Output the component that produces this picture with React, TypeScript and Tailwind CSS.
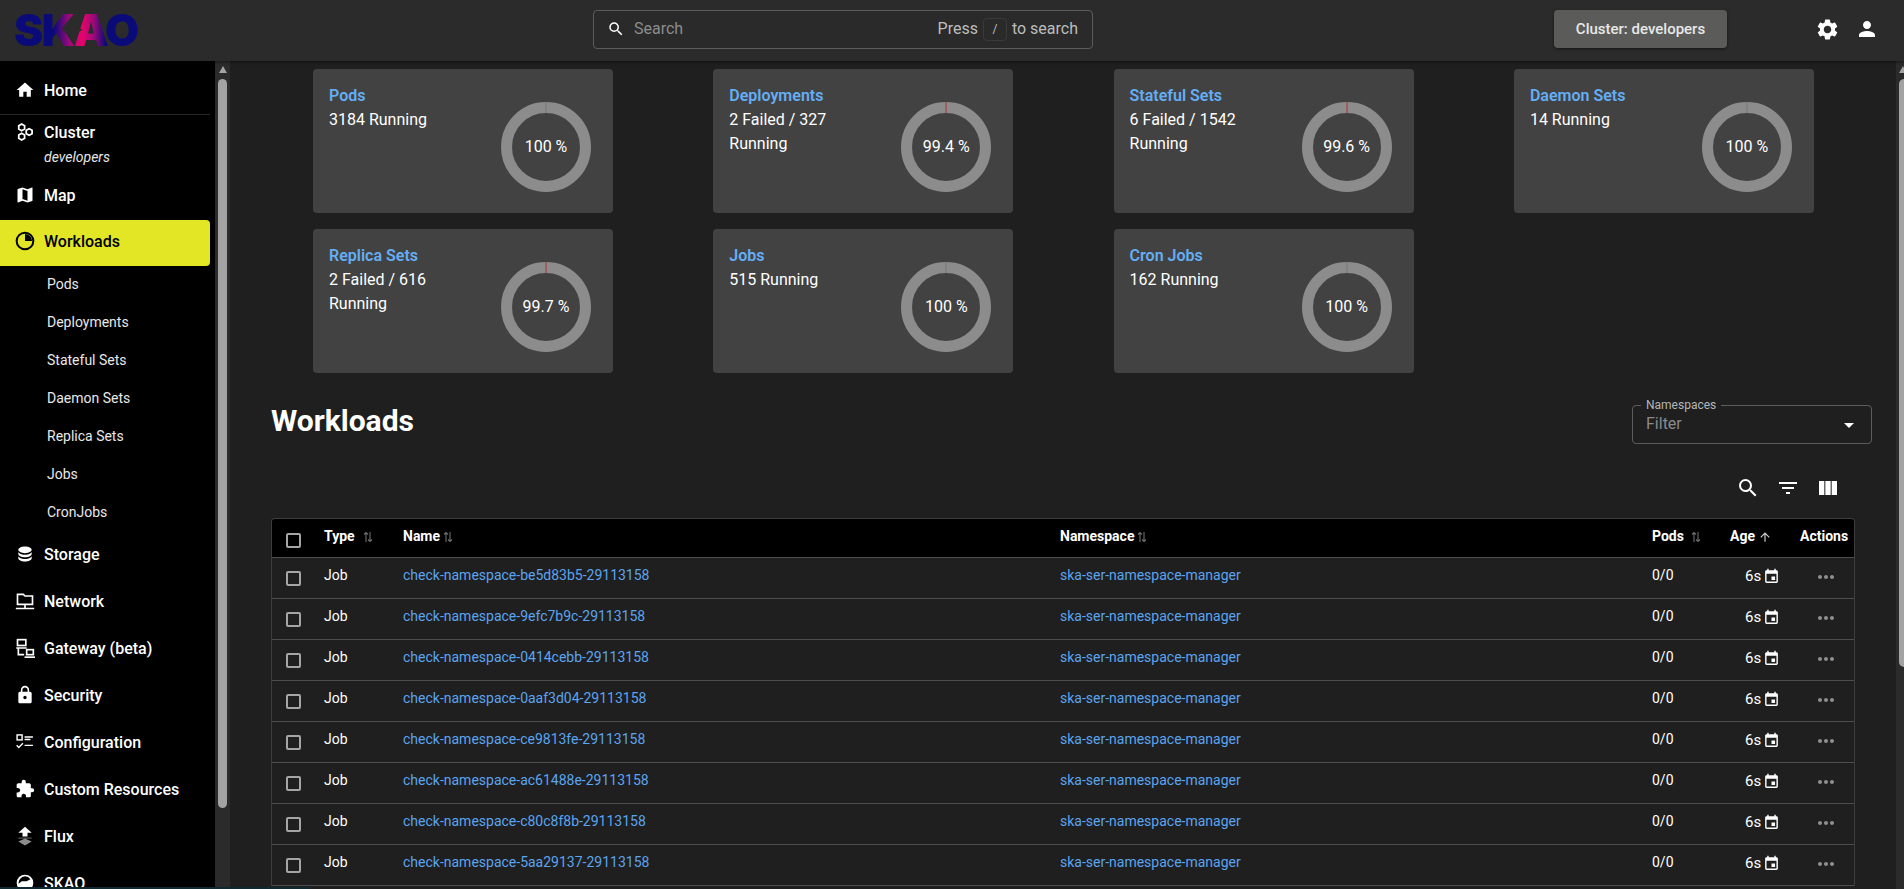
import type { ReactNode } from "react";
import {
  MdArrowDropDown,
  MdArrowUpward,
  MdEvent,
  MdExtension,
  MdFilterList,
  MdHome,
  MdLock,
  MdMap,
  MdMoreHoriz,
  MdPerson,
  MdSearch,
  MdSettings,
  MdViewColumn,
} from "react-icons/md";

const ClusterIcon = () => (
  <svg viewBox="0 0 24 24" className="size-[20px]" fill="none" stroke="currentColor" strokeWidth="2.1">
    <polygon points="8,2.5 11.5,4.5 11.5,8.5 8,10.5 4.5,8.5 4.5,4.5" />
    <polygon points="17,8 20.5,10 20.5,14 17,16 13.5,14 13.5,10" />
    <polygon points="8,13.5 11.5,15.5 11.5,19.5 8,21.5 4.5,19.5 4.5,15.5" />
  </svg>
);

const WorkloadsIcon = () => (
  <svg viewBox="0 0 24 24" className="size-[20px]" fill="none" stroke="currentColor" strokeWidth="2.4">
    <circle cx="12" cy="12" r="10" />
    <path d="M12 3.5a8.5 8.5 0 0 1 8.5 8.5H12z" fill="currentColor" stroke="none" />
  </svg>
);

const StorageIcon = () => (
  <svg viewBox="0 0 24 24" className="size-[20px]" fill="currentColor">
    <path d="M12,3C7.58,3 4,4.79 4,7C4,9.21 7.58,11 12,11C16.42,11 20,9.21 20,7C20,4.79 16.42,3 12,3M4,9V12C4,14.21 7.58,16 12,16C16.42,16 20,14.21 20,12V9C20,11.21 16.42,13 12,13C7.58,13 4,11.21 4,9M4,14V17C4,19.21 7.58,21 12,21C16.42,21 20,19.21 20,17V14C20,16.21 16.42,18 12,18C7.58,18 4,16.21 4,14Z" />
  </svg>
);

const NetworkIcon = () => (
  <svg viewBox="0 0 24 24" className="size-[20px]" fill="none" stroke="currentColor" strokeWidth="2">
    <path d="M3 16V4h7l2 2h9v10z" />
    <path d="M12 16v5M1 21h22" />
  </svg>
);

const GatewayIcon = () => (
  <svg viewBox="0 0 24 24" className="size-[20px]" fill="none" stroke="currentColor" strokeWidth="2">
    <rect x="3" y="2" width="10" height="7" />
    <path d="M1.5 12h12.5M4 12v8h7" />
    <rect x="14" y="14" width="8" height="6" />
    <path d="M11.5 23h12.5" />
  </svg>
);

const ConfigIcon = () => (
  <svg viewBox="0 0 24 24" className="size-[20px]" fill="none" stroke="currentColor" strokeWidth="1.7">
    <rect x="2.5" y="3.5" width="6" height="6" />
    <path d="M11.5 6h10M11.5 9h7M11.5 16h10M2 16l2.5 2.5L9.5 13.5" />
  </svg>
);

const FluxIcon = () => (
  <svg viewBox="0 0 24 24" className="size-[20px]" fill="currentColor">
    <path d="M12 1 20 8h-5v4.5H9V8H4z" />
    <path d="M12 15l8 3.5-8 5-8-5z" opacity="0.55" />
    <path d="M4 14.5h16" stroke="currentColor" strokeWidth="1" opacity="0.5" />
  </svg>
);

const GlobeIcon = () => (
  <svg viewBox="0 0 24 24" className="size-[20px]" fill="currentColor">
    <path d="M12 2a10 10 0 1 0 0 20 10 10 0 0 0 0-20m0 2a8 8 0 0 1 6.5 3.4L14 10H8l-3.6 3A8 8 0 0 1 12 4" />
  </svg>
);

const SortArrows = () => (
  <svg viewBox="0 0 10 12" className="w-[10px] h-[12px] shrink-0 text-[#6e6e6e]" fill="none" stroke="currentColor" strokeWidth="1.1">
    <path d="M3 11V1.5M1 3.5l2-2 2 2M7 1v9.5M5 8.5l2 2 2-2" />
  </svg>
);

const Checkbox = () => <span className="block size-[15px] rounded-[2px] border-2 border-[#a5a5a5]" />;

const NavItem = ({ icon, label, sub, className = "" }: { icon: ReactNode; label: string; sub?: string; className?: string }) => (
  <div className={`flex items-start pl-[13px] h-[47px] pt-[11px] text-white ${className}`}>
    <span className="w-[31px] shrink-0 pl-[2px] pt-[1px]">{icon}</span>
    <div>
      <div className="text-[16px] leading-[24px] font-medium">{label}</div>
      {sub && <div className="text-[14px] leading-[20px] italic text-[#e6e6e6] mt-[2px]">{sub}</div>}
    </div>
  </div>
);

const subItems = ["Pods", "Deployments", "Stateful Sets", "Daemon Sets", "Replica Sets", "Jobs", "CronJobs"];

const Sidebar = () => (
  <aside className="w-[215px] shrink-0 bg-black overflow-hidden">
    <div className="w-[210px]">
      <div className="h-[54px] pt-[7px] border-b border-[#262626]">
        <NavItem icon={<MdHome size={20} />} label="Home" />
      </div>
      <NavItem icon={<ClusterIcon />} label="Cluster" sub="developers" className="!h-[57px] !pt-[6px]" />
      <div className="h-[47px] pt-[1px]">
        <NavItem icon={<MdMap size={20} />} label="Map" />
      </div>
      <div className="mt-[1px] h-[46px] rounded-r-[4px] bg-[#e3e624] text-black">
        <NavItem icon={<WorkloadsIcon />} label="Workloads" className="!text-black !pt-[10px]" />
      </div>
      <ul>
        {subItems.map((s) => (
          <li key={s} className="h-[38px] pl-[47px] text-[14px] leading-[36px] text-[#e8e8e8]">
            {s}
          </li>
        ))}
      </ul>
      <div>
        <NavItem icon={<StorageIcon />} label="Storage" />
        <NavItem icon={<NetworkIcon />} label="Network" />
        <NavItem icon={<GatewayIcon />} label="Gateway (beta)" />
        <NavItem icon={<MdLock size={20} />} label="Security" />
        <NavItem icon={<ConfigIcon />} label="Configuration" />
        <NavItem icon={<MdExtension size={20} />} label="Custom Resources" />
        <NavItem icon={<FluxIcon />} label="Flux" />
        <NavItem icon={<GlobeIcon />} label="SKAO" />
      </div>
    </div>
  </aside>
);

const Scrollbar = ({ wide, thumb }: { wide?: boolean; thumb: string }) => (
  <div className={`shrink-0 bg-[#2b2b2b] flex flex-col pt-[5px] ${wide ? "w-[15px] pl-[3px] pr-[3px]" : "w-[8px] pl-[3px]"}`}>
    <div className="h-0 w-0 mx-auto border-x-[4.5px] border-b-[7px] border-x-transparent border-b-[#a3a3a3]" />
    <div className={`mt-[6px] rounded-[5px] bg-[#a3a3a3] ${thumb} ${wide ? "w-[9px]" : "w-[9px] rounded-r-none"}`} />
  </div>
);

const Donut = ({ pct, failed }: { pct: string; failed?: boolean }) => (
  <div className="relative size-[90px] shrink-0">
    <svg viewBox="0 0 90 90" className="size-[90px]">
      <circle cx="45" cy="45" r="39.5" fill="none" stroke="#8c8c8c" strokeWidth="11" />
      <line x1="45" y1="0" x2="45" y2="11" stroke={failed ? "#a8413f" : "#7a7a7a"} strokeWidth="1.2" />
    </svg>
    <div className="absolute inset-0 flex items-center justify-center text-[16px] text-white">{pct}</div>
  </div>
);

const StatCard = ({ title, lines, pct, failed }: { title: string; lines: string[]; pct: string; failed?: boolean }) => (
  <div className="w-[300px] h-[144px] rounded-[4px] bg-[#424242] flex justify-between pl-[16px] pr-[22px] pt-[33px] relative">
    <div className="-mt-[18px] w-[140px]">
      <div className="text-[16px] leading-[24px] font-semibold text-[#64aef5]">{title}</div>
      {lines.map((l) => (
        <div key={l} className="text-[16px] leading-[24px] text-white">
          {l}
        </div>
      ))}
    </div>
    <Donut pct={pct} failed={failed} />
  </div>
);

const rows = ["be5d83b5", "9efc7b9c", "0414cebb", "0aaf3d04", "ce9813fe", "ac61488e", "c80c8f8b", "5aa29137"];

const Th = ({ children, className = "" }: { children: ReactNode; className?: string }) => (
  <th className={`pl-4 pr-0 pb-[2px] text-left font-bold text-[14px] text-white whitespace-nowrap ${className}`}>{children}</th>
);

const WorkloadsTable = () => (
  <div className="mx-[41px] rounded-t-[4px] border-x border-t border-[#3d3d3d] w-[1584px] overflow-hidden">
    <table className="w-full table-fixed border-collapse text-[14px]">
      <colgroup>
        <col className="w-[36px]" />
        <col className="w-[79px]" />
        <col className="w-[657px]" />
        <col className="w-[592px]" />
        <col className="w-[78px]" />
        <col />
      </colgroup>
      <thead>
        <tr className="h-[38px] bg-black border-b border-[#4d4d4d]">
          <th className="pl-[14px] pt-[6px]">
            <Checkbox />
          </th>
          <Th>
            <span className="flex items-center gap-[8px]">
              Type <SortArrows />
            </span>
          </Th>
          <Th>
            <span className="flex items-center gap-[3px]">
              Name <SortArrows />
            </span>
          </Th>
          <Th>
            <span className="flex items-center gap-[3px]">
              Namespace <SortArrows />
            </span>
          </Th>
          <Th>
            <span className="flex items-center gap-[7px]">
              Pods <SortArrows />
            </span>
          </Th>
          <Th>
            <span className="flex items-center gap-[3px]">
              Age <MdArrowUpward size={14} className="text-[#cfcfcf]" />
            </span>
          </Th>
        </tr>
      </thead>
      <tbody>
        {rows.map((r) => (
          <tr key={r} className="h-[41px] border-b border-[#4d4d4d] text-white">
            <td className="pl-[14px] pt-[1px]">
              <Checkbox />
            </td>
            <td className="px-4 pb-[4px]">Job</td>
            <td className="px-4 pb-[4px]">
              <a className="text-[#5ba4ef]">check-namespace-{r}-29113158</a>
            </td>
            <td className="px-4 pb-[4px]">
              <a className="text-[#5ba4ef]">ska-ser-namespace-manager</a>
            </td>
            <td className="px-4 pb-[4px]">0/0</td>
            <td className="pl-[31px] pb-[2px]">
              <span className="flex items-center gap-[2px] text-[15px]">
                6s <MdEvent size={17} />
              </span>
            </td>
          </tr>
        ))}
      </tbody>
    </table>
  </div>
);

export default function App() {
  return (
    <div className="relative flex h-screen flex-col overflow-hidden bg-[#1f1f1f] font-['Roboto','Noto_Sans',sans-serif]">
      <header className="relative z-10 h-[61px] shrink-0 flex items-center bg-[#2b2b2b] shadow-[0_1px_3px_rgba(0,0,0,0.5)]">
        <div className="relative w-[593px] pl-[14px]">
          <span className="inline-block font-['Inter',sans-serif] font-black text-[44px] leading-[44px] tracking-[-1.5px] bg-[linear-gradient(90deg,#0a0a78_32%,#a00a78_45%,#e8046b_55%,#a00a78_64%,#0a0a78_74%)] bg-clip-text text-transparent">
            SKAO
          </span>
          <svg viewBox="0 0 24 24" className="absolute left-[60px] top-[10px] size-[24px]" fill="#2b2b2b">
            <path d="M12 1l3 8 8 3-8 3-3 8-3-8-8-3 8-3z" />
          </svg>
        </div>
        <div className="h-[39px] w-[500px] rounded-[4px] border border-[#5c5c5c] bg-[#2a2a2a] flex items-center pl-[13px] pr-[14px] mb-[3px]">
          <MdSearch size={18} className="text-white" />
          <span className="ml-[9px] text-[16px] text-[#8c8c8c]">Search</span>
          <div className="ml-auto flex items-center text-[16px] text-[#bdbdbd]">
            Press
            <span className="mx-[5px] flex h-[23px] w-[24px] items-center justify-center rounded-[4px] border border-[#3a3a3a] text-[12px]">/</span>
            to search
          </div>
        </div>
        <button className="ml-[461px] h-[38px] w-[173px] rounded-[4px] bg-[#5b5b59] text-[15px] font-medium text-[#e8e8e8] shadow-[0_1px_3px_rgba(0,0,0,0.5)] mb-[3px]">
          Cluster: developers
        </button>
        <MdSettings size={25} className="ml-[88px] text-white mb-[3px]" />
        <MdPerson size={24} className="ml-[15px] text-white mb-[3px]" />
      </header>

      <div className="flex min-h-0 flex-1">
        <Sidebar />
        <Scrollbar wide thumb="h-[729px]" />
        <main className="min-w-0 flex-1 overflow-hidden">
          <div className="pl-[83px] pt-[8px] grid grid-cols-[repeat(4,300px)] gap-x-[100.3px] gap-y-[16px]">
            <StatCard title="Pods" lines={["3184 Running"]} pct="100 %" />
            <StatCard title="Deployments" lines={["2 Failed / 327", "Running"]} pct="99.4 %" failed />
            <StatCard title="Stateful Sets" lines={["6 Failed / 1542", "Running"]} pct="99.6 %" failed />
            <StatCard title="Daemon Sets" lines={["14 Running"]} pct="100 %" />
            <StatCard title="Replica Sets" lines={["2 Failed / 616", "Running"]} pct="99.7 %" failed />
            <StatCard title="Jobs" lines={["515 Running"]} pct="100 %" />
            <StatCard title="Cron Jobs" lines={["162 Running"]} pct="100 %" />
          </div>

          <div className="mt-[32px] ml-[41px] w-[1601px] flex items-start justify-between">
            <h1 className="text-[30px] leading-[36px] font-bold text-white mt-[-2px]">Workloads</h1>
            <div className="relative h-[39px] w-[240px] rounded-[4px] border border-[#5c5c5c] flex items-center pl-[13px] pr-[10px]">
              <span className="absolute -top-[8px] left-[8px] bg-[#1f1f1f] px-[5px] text-[12px] leading-[14px] text-[#b5b5b5]">Namespaces</span>
              <span className="text-[16px] text-[#8a8a8a] pb-[2px]">Filter</span>
              <MdArrowDropDown size={24} className="ml-auto text-white" />
            </div>
          </div>

          <div className="mt-[27px] w-[1610px] h-[34px] flex items-center justify-end gap-[16px]">
            <MdSearch size={24} className="text-white" />
            <MdFilterList size={24} className="text-white" />
            <MdViewColumn size={24} className="text-white" />
          </div>

          <div className="mt-[13px] relative">
            <WorkloadsTable />
            <div className="absolute left-[1570px] top-[-1px] h-[38px] flex items-center text-[14px] font-bold text-white">Actions</div>
            <div className="absolute left-[1584px] top-[38px] flex flex-col text-[#8f8f8f]">
              {rows.map((r) => (
                <div key={r} className="h-[41px] flex items-center">
                  <MdMoreHoriz size={24} />
                </div>
              ))}
            </div>
          </div>
        </main>
        <Scrollbar thumb="h-[588px]" />
      </div>
      <div className="absolute bottom-0 left-0 h-[2px] w-[310px] bg-[#10282f]" />
    </div>
  );
}
